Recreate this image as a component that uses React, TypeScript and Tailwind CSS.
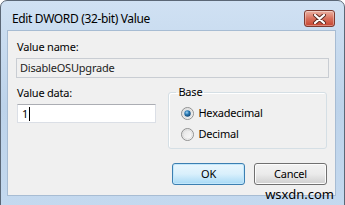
import React from "react";

const font = { fontFamily: '"Noto Sans", "Open Sans", sans-serif' };

function Radio({ checked }: { checked: boolean }) {
  return (
    <svg width="13" height="13" viewBox="0 0 13 13" className="shrink-0">
      <defs>
        <linearGradient id={checked ? "rg1" : "rg0"} x1="0" y1="0" x2="1" y2="1">
          <stop offset="0" stopColor="#e0e0e0" />
          <stop offset="1" stopColor="#ffffff" />
        </linearGradient>
        <radialGradient id="dot" cx="0.4" cy="0.35" r="0.7">
          <stop offset="0" stopColor="#9fd2f4" />
          <stop offset="0.45" stopColor="#2b7bb5" />
          <stop offset="1" stopColor="#0f3f6a" />
        </radialGradient>
      </defs>
      <circle cx="6.5" cy="6.5" r="6" fill={`url(#${checked ? "rg1" : "rg0"})`} stroke="#8f9090" strokeWidth="1" />
      <circle cx="6.5" cy="6.5" r="4.6" fill="none" stroke="#d8d8d8" strokeWidth="0.8" />
      {checked && <circle cx="6.5" cy="6.5" r="3.2" fill="url(#dot)" />}
    </svg>
  );
}

function CloseIcon() {
  return (
    <svg width="13" height="10" viewBox="0 0 13 10">
      <path d="M2 1 L11 9 M11 1 L2 9" stroke="#5a2a22" strokeWidth="4" strokeLinecap="round" />
      <path d="M2 1 L11 9 M11 1 L2 9" stroke="#ffffff" strokeWidth="2.2" strokeLinecap="round" />
    </svg>
  );
}

export default function App() {
  return (
    <div className="w-[345px] h-[205px] overflow-hidden bg-white relative" style={font}>
      <div className="w-[345px] h-[212px] rounded-t-[7px] border border-[#5b6776] bg-gradient-to-b from-[#d0e1f3] via-[#bdd3ea] to-[#c4d9ef] flex flex-col">
        {/* title bar */}
        <div className="h-[29px] flex items-start pl-[11px] pr-[9px]">
          <div className="pt-[10px] text-[12px] leading-[16px] tracking-[-0.35px] text-black">Edit DWORD (32-bit) Value</div>
          <div className="ml-auto mt-[9px] w-[31px] h-[17px] rounded-[3px] border border-[#7e3a30] bg-gradient-to-b from-[#eab2a4] via-[#d8705d] to-[#c5432f] flex items-center justify-center shadow-[inset_0_0_0_1px_rgba(255,255,255,0.35)]">
            <CloseIcon />
          </div>
        </div>
        {/* client area */}
        <div className="ml-[6px] mr-[8px] h-[166px] bg-[#f0f0f0] border border-[#a7bcd3] flex flex-col pl-[8px] pr-[8px] pt-[8px] text-[11px] leading-[16px] tracking-[-0.2px] text-black">
          <div className="pl-[1px]">Value name:</div>
          <div className="mt-[3px] h-[20px] w-[313px] border border-[#c9cdd3] bg-[#f0f0f0] flex items-center pl-[3px] text-[#222]">
            DisableOSUpgrade
          </div>
          <div className="flex mt-[7px]">
            <div className="flex flex-col w-[150px]">
              <div className="pl-[1px]">Value data:</div>
              <div className="mt-[3px] ml-[1px] h-[19px] w-[139px] bg-white border border-[#dbdfe6] border-t-[#abadb3] flex items-center pl-[4px]">
                <span>1</span>
                <span className="w-[1px] h-[14px] bg-black ml-[1px]" />
              </div>
            </div>
            <fieldset className="ml-[7px] w-[163px] h-[65px] border border-[#d5dfe5] rounded-[3px] px-[9px] -mt-[1px] shadow-[inset_1px_1px_0_#ffffff]">
              <legend className="ml-[-2px] px-[2px]">Base</legend>
              <div className="flex items-center gap-[4px] mt-[5px] pl-[3px]">
                <Radio checked />
                <span>Hexadecimal</span>
              </div>
              <div className="flex items-center gap-[4px] mt-[5px] pl-[3px]">
                <Radio checked={false} />
                <span>Decimal</span>
              </div>
            </fieldset>
          </div>
          <div className="flex justify-end gap-[9px] mt-[14px]">
            <div className="w-[73px] h-[22px] rounded-[3px] border border-[#3c7fb1] bg-gradient-to-b from-[#eaf6fd] via-[#d9f0fc] to-[#a7d9f5] flex items-center justify-center shadow-[inset_0_0_0_1px_#c2e7fb]">
              OK
            </div>
            <div className="w-[73px] h-[22px] rounded-[3px] border border-[#707070] bg-gradient-to-b from-[#f2f2f2] via-[#ebebeb] to-[#cfcfcf] flex items-center justify-center shadow-[inset_0_0_0_1px_#fcfcfc]">
              Cancel
            </div>
          </div>
        </div>
      </div>
      <div className="absolute right-[11px] top-[186px] text-[13px] leading-[16px] text-black" style={font}>
        wsxdn.com
      </div>
    </div>
  );
}
